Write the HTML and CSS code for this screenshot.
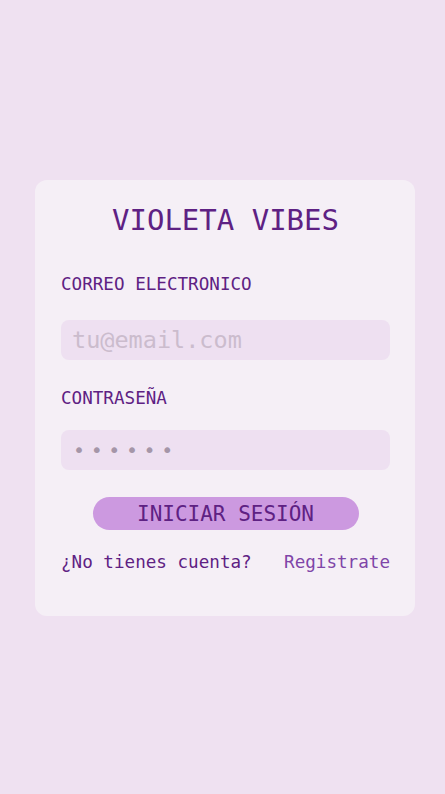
FILE: index.html
```html
<!DOCTYPE html>
<html lang="es">
<head>
<meta charset="utf-8">
<title>Violeta Vibes</title>
<link rel="stylesheet" href="styles.css">
</head>
<body>
<main class="page">
  <form class="card">
    <h1 class="title">VIOLETA VIBES</h1>
    <label class="label label-email" for="email">CORREO ELECTRONICO</label>
    <input class="field field-email" id="email" type="email" placeholder="tu@email.com">
    <label class="label label-pass" for="pass">CONTRASEÑA</label>
    <input class="field field-pass" id="pass" type="text" placeholder="••••••">
    <button class="btn" type="button">INICIAR SESIÓN</button>
    <div class="foot">
      <span class="ask">¿No tienes cuenta?</span>
      <a class="link" href="#">Registrate</a>
    </div>
  </form>
</main>
</body>
</html>
```
FILE: styles.css
```css
* { box-sizing: border-box; }
html, body { margin: 0; padding: 0; }
body {
  background: #efe1f1;
  font-family: "DejaVu Sans Mono", monospace;
  color: #5e2183;
}
.page {
  min-height: 794px;
  display: flex;
  align-items: center;
  justify-content: center;
  padding: 2px 30px 0 35px;
}
.card {
  width: 380px;
  height: 436px;
  background: #f5eff6;
  border-radius: 12px;
  padding: 22px 25px 0 26px;
  display: flex;
  flex-direction: column;
}
.title {
  margin: 0;
  font-size: 29px;
  font-weight: normal;
  text-align: center;
  line-height: 36px;
  color: #5e2183;
}
.label {
  font-size: 17.6px;
  line-height: 22px;
  color: #5e2183;
}
.label-email { margin-top: 35px; }
.label-pass { margin-top: 27px; }
.field {
  height: 40px;
  width: 100%;
  border: none;
  border-radius: 8px;
  background: #eee0f1;
  padding: 0 11px;
  font-family: "DejaVu Sans Mono", monospace;
  font-size: 23.5px;
  color: #5e2183;
  outline: none;
}
.field-email { margin-top: 25px; }
.field-pass {
  margin-top: 21px;
  letter-spacing: 5.6px;
  padding-left: 12px;
  font-size: 20px;
}
.field::placeholder { color: #cbbccd; }
.field-pass::placeholder { color: #a596a8; }
.btn {
  align-self: center;
  margin-top: 27px;
  width: 266px;
  height: 33px;
  border: none;
  border-radius: 17px;
  background: #cc99e0;
  font-family: "DejaVu Sans Mono", monospace;
  font-size: 21px;
  color: #5e2183;
  padding: 0;
}
.foot {
  margin-top: 20px;
  display: flex;
  justify-content: space-between;
  font-size: 17.6px;
  line-height: 24px;
}
.ask { color: #5e2183; }
.link { color: #7f45a8; text-decoration: none; }
```
